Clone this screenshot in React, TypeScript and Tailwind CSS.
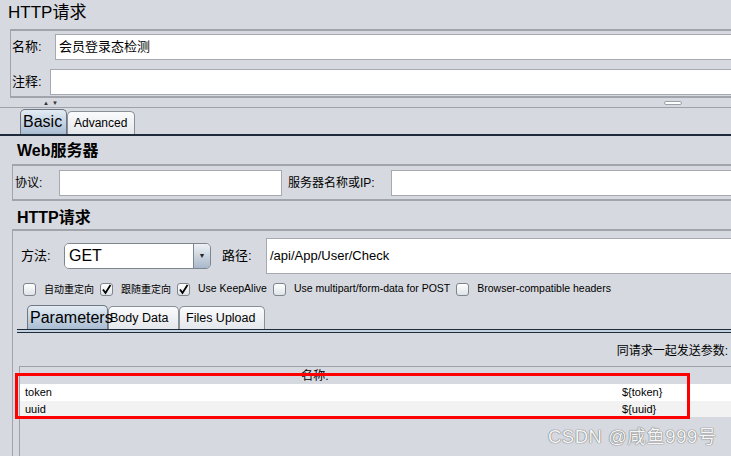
import React from "react";

const FONT = "font-['Liberation_Sans','Noto_Sans_CJK_SC',sans-serif]";

const Check = ({ checked }: { checked?: boolean }) => (
  <span className="w-[13px] h-[13px] shrink-0 rounded-[3px] border border-[#7f858d] bg-gradient-to-b from-white to-[#dfe3e8] flex items-center justify-center">
    {checked && (
      <svg width="11" height="11" viewBox="0 0 11 11">
        <path d="M2 5.5 L4.5 9 L9.5 1" fill="none" stroke="#000" strokeWidth="1.8" />
      </svg>
    )}
  </span>
);

const Opt = ({ label, checked, cjk }: { label: string; checked?: boolean; cjk?: boolean }) => (
  <div className="flex items-center gap-[8px]">
    <Check checked={checked} />
    <span className={cjk ? "text-[10px]" : "text-[10.5px]"}>{label}</span>
  </div>
);

const Tab = ({ label, active, cls }: { label: string; active?: boolean; cls: string }) => (
  <div
    className={
      "border border-b-0 rounded-t-[5px] flex items-center overflow-visible whitespace-nowrap " +
      (active
        ? "border-[#6f7782] bg-gradient-to-b from-[#e4ecf4] to-[#a9bdd2] z-10 "
        : "border-[#8a9097] bg-gradient-to-b from-[#fafbfc] to-[#e4e7eb] ") +
      cls
    }
  >
    {label}
  </div>
);

export default function App() {
  return (
    <div className={"relative w-[731px] h-[456px] overflow-hidden bg-[#d6d9df] text-black " + FONT}>
      {/* title */}
      <div className="h-[29px] pl-[8px] pt-[3px] text-[17px] leading-[20px]">HTTP请求</div>

      {/* name / comment */}
      <div className="ml-[10px] -mr-[8px] h-[69px] border-t-2 border-l border-b-2 border-[#a1a5ab] flex flex-col pt-[3px]">
        <div className="flex items-center h-[26px]">
          <span className="w-[44px] pl-[1px] text-[13px]">名称:</span>
          <div className="flex-1 h-[26px] bg-white border border-[#a6aab0] flex items-center pl-[3px] text-[13px]">
            会员登录态检测
          </div>
        </div>
        <div className="flex items-center h-[26px] mt-[9px]">
          <span className="w-[39px] pl-[1px] text-[13px]">注释:</span>
          <div className="flex-1 h-[26px] bg-white border border-[#a6aab0]" />
        </div>
      </div>

      {/* split divider */}
      <div className="h-[10px] border-b border-[#9ea2a8] flex items-center relative">
        <span className="ml-[43px] text-[6px] leading-none text-[#333]">▲</span>
        <span className="ml-[3px] text-[6px] leading-none text-[#333]">▼</span>
        <span className="absolute left-[664px] top-[3px] w-[18px] h-[4px] rounded-[2px] border border-[#9aa0a8] bg-white" />
      </div>

      {/* Basic / Advanced tabs */}
      <div className="flex items-end h-[28px] pl-[20px] border-b-2 border-[#1f2a3a]">
        <Tab label="Basic" active cls="h-[25px] w-[47px] pl-[2px] text-[16px]" />
        <Tab label="Advanced" cls="h-[23px] w-[68px] pl-[6px] text-[12px]" />
      </div>

      {/* Web server */}
      <div className="h-[28px] pl-[17px] pt-[6px] text-[16px] font-bold leading-[18px]">Web服务器</div>
      <div className="ml-[12px] -mr-[8px] h-[37px] border-t-2 border-l border-b-2 border-[#a1a5ab] flex items-center">
        <span className="w-[46px] pl-[2px] text-[12px]">协议:</span>
        <div className="w-[223px] h-[26px] bg-white border border-[#a6aab0]" />
        <span className="ml-[6px] w-[103px] text-[12px]">服务器名称或IP:</span>
        <div className="flex-1 h-[26px] bg-white border border-[#a6aab0]" />
      </div>

      {/* HTTP request */}
      <div className="h-[28px] pl-[17px] pt-[8px] text-[16px] font-bold leading-[18px]">HTTP请求</div>
      <div className="ml-[12px] -mr-[8px] h-[240px] border-t-2 border-l border-[#a1a5ab] flex flex-col">
        <div className="flex items-center h-[40px] mt-[5px]">
          <span className="w-[51px] pl-[8px] text-[13px]">方法:</span>
          <div className="w-[147px] h-[26px] flex border border-[#7e8690] rounded-[5px] overflow-hidden">
            <div className="flex-1 bg-white pl-[4px] flex items-center text-[16px]">GET</div>
            <div className="w-[17px] border-l border-[#7e8690] bg-gradient-to-b from-[#eef2f6] to-[#a9b8ca] flex items-center justify-center">
              <span className="text-[7px] text-[#222]">▼</span>
            </div>
          </div>
          <span className="ml-[11px] w-[44px] text-[13px]">路径:</span>
          <div className="flex-1 h-[36px] bg-white border border-[#a6aab0] flex items-center pl-[3px] text-[13px]">
            /api/App/User/Check
          </div>
        </div>

        <div className="flex items-center gap-[6px] h-[14px] mt-[6px] pl-[10px]">
          <Opt label="自动重定向" cjk />
          <Opt label="跟随重定向" checked cjk />
          <Opt label="Use KeepAlive" checked />
          <Opt label="Use multipart/form-data for POST" />
          <Opt label="Browser-compatible headers" />
        </div>

        <div className="flex items-end h-[24px] mt-[10px] ml-[4px] pl-[10px] border-b border-[#1f2a3a]">
          <Tab label="Parameters" active cls="h-[24px] w-[81px] pl-[2px] text-[16px]" />
          <Tab label="Body Data" cls="h-[23px] w-[71px] pl-[1px] text-[12.5px]" />
          <Tab label="Files Upload" cls="h-[23px] w-[86px] pl-[6px] text-[12.5px]" />
        </div>
        <div className="ml-[4px] h-[3px] bg-[#c3d1e0] border-b border-[#1f2a3a]" />

        <div className="flex justify-end h-[33px] pr-[11px] pt-[9px] text-[12px]">同请求一起发送参数:</div>

        <div className="ml-[6px] flex-1 border-t border-l border-[#9ea2a8] flex flex-col">
          <div className="h-[17px] bg-[#d6d9df] flex justify-center text-[12px] leading-[19px] pl-[8px] w-[582px]">名称:</div>
          <div className="h-[17px] bg-white pl-[5px] flex text-[11px] leading-[17px]">
            <span className="w-[597px]">token</span>
            <span>{"${token}"}</span>
          </div>
          <div className="h-[16px] bg-[#f2f2f2] pl-[5px] flex text-[11px] leading-[16px]">
            <span className="w-[597px]">uuid</span>
            <span>{"${uuid}"}</span>
          </div>
        </div>
      </div>

      {/* red annotation */}
      <div className="absolute left-[15px] top-[373px] w-[675px] h-[46px] border-[3px] border-[#ff0000]" />

      {/* watermark */}
      <div className="absolute left-[548px] top-[423px] text-[18.5px] text-[#f6f6f6] [text-shadow:0_0_1px_#666,0_0_1px_#666] tracking-[0.5px]">
        CSDN @咸鱼999号
      </div>
    </div>
  );
}
